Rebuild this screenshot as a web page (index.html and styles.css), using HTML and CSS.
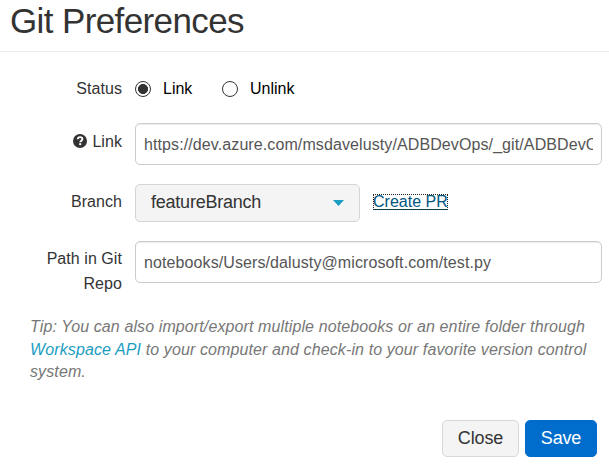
FILE: index.html
```html
<!DOCTYPE html>
<html lang="en">
<head>
<meta charset="utf-8">
<title>Git Preferences</title>
<link rel="stylesheet" href="styles.css">
</head>
<body>
<main class="dialog">
  <header class="header"><h1 class="title">Git Preferences</h1></header>
  <form class="form">
    <div class="row row-status">
      <span class="label">Status</span>
      <div class="radios">
        <label class="radio"><input type="radio" name="status" checked><span>Link</span></label>
        <label class="radio"><input type="radio" name="status"><span>Unlink</span></label>
      </div>
    </div>
    <div class="row row-link">
      <label class="label" for="link"><svg class="help" viewBox="0 0 14 14"><circle cx="7" cy="7" r="7" fill="#333"/><path d="M4.8 5.2C4.9 3.7 5.8 3.1 7 3.1c1.4 0 2.4.8 2.4 2 0 1.6-2.1 1.6-2.1 3.1" fill="none" stroke="#fff" stroke-width="1.9"/><path d="M6.2 9.2h2v1.9h-2z" fill="#fff"/></svg>Link</label>
      <input class="field" id="link" type="text" value="https://dev.azure.com/msdavelusty/ADBDevOps/_git/ADBDevOps">
    </div>
    <div class="row row-branch">
      <span class="label">Branch</span>
      <div class="branch">
        <button class="select" type="button"><span>featureBranch</span><svg class="caret" viewBox="0 0 11 6"><path d="M0 0h11L5.5 6z" fill="#1c9dc2"/></svg></button>
        <a class="create" href="#">Create PR</a>
      </div>
    </div>
    <div class="row row-path">
      <label class="label" for="path">Path in Git Repo</label>
      <input class="field" id="path" type="text" value="notebooks/Users/dalusty@microsoft.com/test.py">
    </div>
  </form>
  <p class="tip">Tip: You can also import/export multiple notebooks or an entire folder through<br><a class="api" href="#">Workspace API</a> to your computer and check-in to your favorite version control<br>system.</p>
  <footer class="footer">
    <button class="button" type="button">Close</button>
    <button class="button primary" type="button">Save</button>
  </footer>
</main>
</body>
</html>
```
FILE: styles.css
```css
* { box-sizing: border-box; }
body {
  margin: 0;
  background: #fff;
  color: #333;
  font: 16px/25px "Liberation Sans", Arial, sans-serif;
  overflow: hidden;
}
input, button { font-family: inherit; margin: 0; }
.dialog { width: 609px; height: 464px; }
.header { height: 52px; border-bottom: 1px solid #eee; padding-left: 10px; }
.title { margin: 0; font-size: 35px; font-weight: 400; line-height: 42px; letter-spacing: -0.62px; white-space: nowrap; }
.form { padding-top: 24px; }
.row { display: grid; grid-template-columns: 122px 467px; column-gap: 13px; align-items: start; }
.label { text-align: right; padding-left: 40px; letter-spacing: 0.06px; }
.row-status { height: 47px; }
.row-link { height: 61px; }
.row-link .label { padding-top: 6px; }
.row-path .label { padding-top: 5px; }
.row-branch { height: 57px; }
.row-branch .label { padding-top: 5px; }
.row-path { height: 74px; }
.radios { display: flex; gap: 29px; color: #000; }
.radio { display: flex; align-items: center; gap: 12px; }
.radio input {
  appearance: none;
  width: 16px;
  height: 16px;
  border: 1px solid #333;
  border-radius: 50%;
  background: #fff;
}
.radio input:checked { background: radial-gradient(circle, #333 0 4.7px, #fff 5.3px); }
.radio:first-child { width: 58px; }
.help { width: 14px; height: 14px; margin-right: 5px; vertical-align: -1px; }
.field {
  width: 467px;
  height: 42px;
  padding: 1px 8px 0;
  border: 1px solid #ccc;
  border-radius: 5px;
  box-shadow: inset 0 1px 1px #00000013;
  background: #fff;
  color: #555;
  font-size: 16px;
  letter-spacing: 0.1px;
}
.branch { display: flex; align-items: flex-start; }
.select {
  display: flex;
  align-items: center;
  justify-content: space-between;
  width: 225px;
  height: 38px;
  padding: 0 15px 2px;
  border: 1px solid #d4d4d4;
  border-radius: 5px;
  background: #f4f4f4;
  color: #333;
  font-size: 18px;
  letter-spacing: -0.23px;
}
.caret { width: 11px; height: 6px; margin-top: 1px; }
.create {
  margin: 10px 0 0 13px;
  height: 16px;
  line-height: 16px;
  color: #005580;
  text-underline-offset: 2px;
  outline: 1px dotted #222;
  outline-offset: -1px;
}
.tip {
  margin: 0 0 0 30px;
  padding-top: 1px;
  color: #777;
  font-style: italic;
  line-height: 22.5px;
  letter-spacing: 0.11px;
  white-space: nowrap;
}
.api { color: #1c9dc2; text-decoration: none; }
.footer { display: flex; justify-content: flex-end; gap: 6px; padding: 36px 12px 0 0; }
.button {
  width: 77px;
  height: 37px;
  padding: 0;
  border: 1px solid #d8d8d8;
  border-radius: 5px;
  background: #f4f4f4;
  color: #333;
  font-size: 18px;
  letter-spacing: -0.15px;
}
.primary { width: 72px; border-color: #006bca; background: #006dcc; color: #fff; }
```
